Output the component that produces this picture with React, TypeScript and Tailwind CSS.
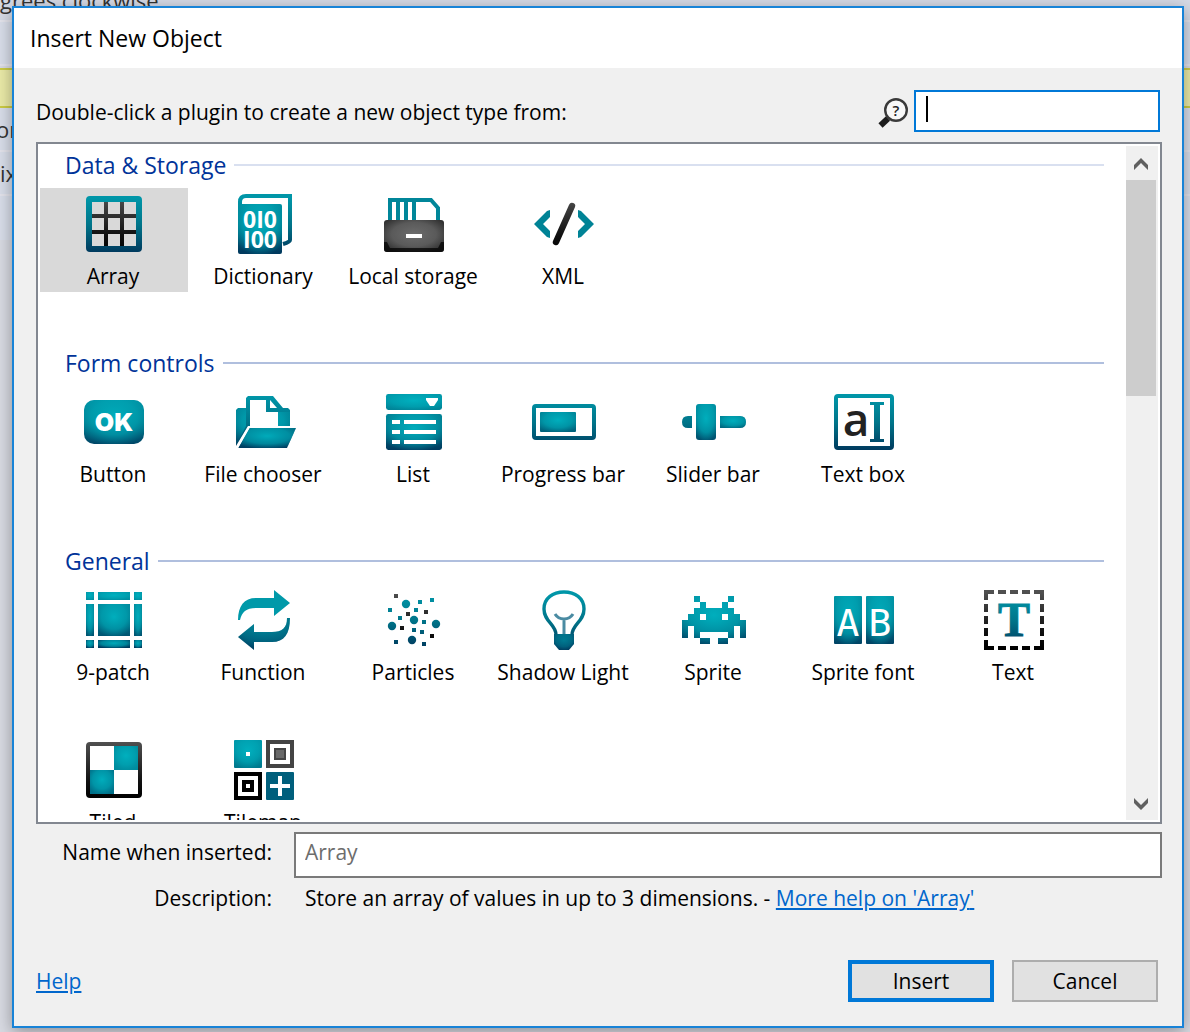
import type { ReactNode } from 'react'
import { useRef, useState } from 'react'
import clsx from 'clsx'

type Plugin = {
  id: string
  label: string
  description: string
  icon: ReactNode
}

type Group = { title: string; faint?: boolean; plugins: Plugin[] }

const TEAL = 'url(#teal)'
const GLOW = 'url(#glow)'
const DARK = 'url(#dark)'

function Icon({ children }: { children: ReactNode }) {
  return (
    <svg viewBox="0 0 32 32" className="size-16 shrink-0" aria-hidden>
      {children}
    </svg>
  )
}

// Gradients shared by all the plugin icons
function IconDefs() {
  return (
    <svg className="absolute size-0" aria-hidden>
      <defs>
        <linearGradient id="teal" gradientUnits="userSpaceOnUse" x1="0" y1="3" x2="0" y2="30">
          <stop offset="0" stopColor="#0096a8" />
          <stop offset="0.5" stopColor="#007489" />
          <stop offset="1" stopColor="#003a5e" />
        </linearGradient>
        <linearGradient id="dark" gradientUnits="userSpaceOnUse" x1="0" y1="2" x2="0" y2="30">
          <stop offset="0" stopColor="#505050" />
          <stop offset="0.7" stopColor="#101010" />
          <stop offset="1" stopColor="#000000" />
        </linearGradient>
        <radialGradient id="glow" cx="0.5" cy="0.4" r="0.65">
          <stop offset="0" stopColor="#00b4c2" stopOpacity="0.9" />
          <stop offset="0.6" stopColor="#00a8b7" stopOpacity="0.65" />
          <stop offset="1" stopColor="#00a0b0" stopOpacity="0" />
        </radialGradient>
        <radialGradient id="steel" cx="0.5" cy="0.45" r="0.62">
          <stop offset="0" stopColor="#6c6c6c" />
          <stop offset="0.6" stopColor="#5a5a5a" />
          <stop offset="1" stopColor="#303030" />
        </radialGradient>
      </defs>
    </svg>
  )
}

type BlockProps = { x: number; y: number; w: number; h: number; r?: number }

function Block({ x, y, w, h, r = 0.5 }: BlockProps) {
  return (
    <>
      <rect x={x} y={y} width={w} height={h} rx={r} fill={TEAL} />
      <rect x={x} y={y} width={w} height={h} rx={r} fill={GLOW} />
    </>
  )
}

const ArrayIcon = (
  <Icon>
    <path d="M5 12H27M5 20H27M12 5V27M20 5V27" stroke={DARK} strokeWidth="2" fill="none" />
    <rect x="3.5" y="3.5" width="25" height="25" rx="0.5" fill="none" stroke={TEAL} strokeWidth="3" />
  </Icon>
)

const DictionaryIcon = (
  <Icon>
    <path d="M4 10V5Q4 2 7 2H29V24Q29 25 25.5 26" fill="white" stroke={TEAL} strokeWidth="2" />
    <Block x={3} y={6} w={22} h={25} r={1} />
    <g className="font-['Open_Sans'] font-bold" fill="white" fontSize="11.5" textAnchor="middle">
      <text x="14" y="18">0I0</text>
      <text x="14" y="28">I00</text>
    </g>
  </Icon>
)

const LocalStorageIcon = (
  <Icon>
    <path d="M4 15V4H24.5L28 8V15M8 4V15M12 4V15M16 4V15" fill="none" stroke="#008699" strokeWidth="2" />
    <rect x="1" y="14" width="30" height="16" rx="1.5" fill="url(#steel)" />
    <path d="M1 25H2.5L4 28H28L29.5 25H31V28.5Q31 30 29.5 30H2.5Q1 30 1 28.5Z" fill="black" fillOpacity="0.7" />
    <rect x="12" y="21" width="8" height="2" fill="white" />
  </Icon>
)

const XmlIcon = (
  <Icon>
    <path d="M9 9V12.5L5.5 16L9 19.5V23L7.5 22.5L1 16L7.5 9.5ZM23 9V12.5L26.5 16L23 19.5V23L24.5 22.5L31 16L24.5 9.5Z" fill="#008396" />
    <path d="M12 25L20 7" stroke={DARK} strokeWidth="3.2" strokeLinecap="round" />
  </Icon>
)

const ButtonIcon = (
  <Icon>
    <Block x={1} y={5} w={30} h={22} r={5} />
    <text x="16" y="20.5" className="font-['Inter'] font-black" fill="white" fontSize="12.5" textAnchor="middle">OK</text>
  </Icon>
)

const FileChooserIcon = (
  <Icon>
    <path d="M2 28V10L3 9H7V4L8 3H20.5L25.5 9H28L29 10V18H8Z" fill={TEAL} />
    <path d="M2 28V10L3 9H7V18ZM23 11H29V18H23Z" fill={GLOW} />
    <path d="M9 5H17V11H23V18H9ZM19 5L22.5 9H19Z" fill="white" />
    <path d="M8.7 19H32L27.5 29H3Z" fill={TEAL} />
    <path d="M8.7 19H32L27.5 29H3Z" fill={GLOW} />
    <path d="M29 18.5H8.5L2.5 29" fill="none" stroke="white" strokeWidth="1" />
  </Icon>
)

const ListIcon = (
  <Icon>
    <Block x={2} y={2} w={28} h={8} r={1.2} />
    <path d="M22 4H28V5L26 8H24L22 5Z" fill="white" />
    <Block x={2} y={12} w={28} h={18} r={1.2} />
    <path d="M5 16H9M11 16H27M5 21H9M11 21H27M5 26H9M11 26H27" stroke="white" strokeWidth="2" />
  </Icon>
)

const ProgressBarIcon = (
  <Icon>
    <rect x="1" y="8" width="30" height="16" rx="1" fill="white" stroke={TEAL} strokeWidth="2" />
    <Block x={4} y={11} w={18} h={10} />
  </Icon>
)

const SliderBarIcon = (
  <Icon>
    <path d="M5 13V19H3Q0 19 0 16Q0 13 3 13ZM19 13H29Q32 13 32 16Q32 19 29 19H19Z" fill={TEAL} />
    <path d="M19 13H29Q32 13 32 16Q32 19 29 19H19Z" fill={GLOW} />
    <Block x={7} y={7} w={10} h={18} r={1.5} />
  </Icon>
)

const TextBoxIcon = (
  <Icon>
    <rect x="2" y="3" width="28" height="26" rx="1" fill="white" stroke={TEAL} strokeWidth="2" />
    <text x="12" y="23" className="font-['Open_Sans'] font-semibold" fill="#222" fontSize="23" textAnchor="middle">a</text>
    <rect x="19" y="6" width="7" height="1.5" fill={TEAL} />
    <rect x="19" y="24.5" width="7" height="1.5" fill={TEAL} />
    <rect x="21" y="7" width="3" height="18" fill={TEAL} />
  </Icon>
)

const NinePatchIcon = (
  <Icon>
    {[
      [2, 4],
      [8, 16],
      [26, 4]
    ].map(([y, h]) => (
      <g key={y}>
        <Block x={2} y={y} w={4} h={h} r={0} />
        <Block x={8} y={y} w={16} h={h} r={0} />
        <Block x={26} y={y} w={4} h={h} r={0} />
      </g>
    ))}
  </Icon>
)

const FunctionIcon = (
  <Icon>
    <path d="M21 1L29 7.5L21 14V10H12C7 10 5 12 4 16H3C3 9 6 5 12 5H21Z" fill="#0099a9" />
    <path d="M11 31L3 24.5L11 18V22H20C25 22 27.5 20 27.5 15H29C29 23 26 27 20 27H11Z" fill={TEAL} />
    <path d="M11 31L3 24.5L11 18V22H20C25 22 27.5 20 27.5 15H29C29 23 26 27 20 27H11Z" fill={GLOW} fillOpacity="0.4" />
  </Icon>
)

const dots = [[19, 7], [25, 6], [4, 11], [17, 11], [9, 15], [21, 17], [16, 21], [20, 22], [7, 27], [21, 28]]
const darkDots = [[7, 4], [13, 13], [22, 12], [10, 20], [25, 24]]
const bigDots = [[12, 8], [16, 16], [27, 18], [5, 19], [15, 26]]

const ParticlesIcon = (
  <Icon>
    {dots.map(([x, y]) => (
      <rect key={`${x}-${y}`} x={x - 1} y={y - 1} width="2" height="2" fill={TEAL} />
    ))}
    {darkDots.map(([x, y]) => (
      <rect key={`${x}-${y}`} x={x - 1} y={y - 1} width="2" height="2" fill={DARK} />
    ))}
    {bigDots.map(([x, y]) => (
      <circle key={`${x}-${y}`} cx={x} cy={y} r="2.1" fill={TEAL} />
    ))}
  </Icon>
)

const ShadowLightIcon = (
  <Icon>
    <path
      d="M12 23.5C12 18 6 17 6 10.5C6 5 10.5 2 16 2S26 5 26 10.5C26 17 20 18 20 23.5"
      fill="white"
      stroke={TEAL}
      strokeWidth="1.7"
    />
    <path d="M11.5 13Q13 15.5 16 15.5T20.5 13M16 15.5V23" fill="none" stroke="#4a8ba2" strokeWidth="1.5" />
    <path d="M11 23H21V28L18.5 31H13.5L11 28Z" fill={TEAL} />
    <path d="M11 23H21V28L18.5 31H13.5L11 28Z" fill={GLOW} fillOpacity="0.5" />
  </Icon>
)

const invader =
  'M6 4H9V7H12V10H20V7H23V4H26V7H23V10H26V13H29V16H32V25H29V19H26V25H23V28H18V25H23V22H9V25H14V28H9V25H6V19H3V25H0V16H3V13H6V10H9V7H6ZM9 13V16H12V13ZM20 13V16H23V13Z'

const SpriteIcon = (
  <Icon>
    <path d={invader} fill={TEAL} fillRule="evenodd" />
    <path d={invader} fill={GLOW} fillRule="evenodd" />
  </Icon>
)

const SpriteFontIcon = (
  <Icon>
    <Block x={1} y={4} w={14} h={24} />
    <Block x={17} y={4} w={14} h={24} />
    <g className="font-['DejaVu_Sans_Mono']" fill="white" fontSize="19" textAnchor="middle">
      <text x="8" y="24">A</text>
      <text x="24" y="24">B</text>
    </g>
  </Icon>
)

const TextIcon = (
  <Icon>
    <path
      d="M1 6V1H6V3H3V6ZM26 1H31V6H29V3H26ZM31 26V31H26V29H29V26ZM6 31H1V26H3V29H6ZM8 1H12V3H8ZM14 1H18V3H14ZM20 1H24V3H20ZM8 29H12V31H8ZM14 29H18V31H14ZM20 29H24V31H20ZM1 8H3V12H1ZM1 14H3V18H1ZM1 20H3V24H1ZM29 8H31V12H29ZM29 14H31V18H29ZM29 20H31V24H29Z"
      fill={DARK}
    />
    <text x="16" y="24" className="font-['Liberation_Serif'] font-bold" fill={TEAL} stroke={TEAL} strokeWidth="0.5" fontSize="24" textAnchor="middle">T</text>
  </Icon>
)

const TiledIcon = (
  <Icon>
    <rect x="3" y="3" width="26" height="26" rx="1" fill="white" stroke={DARK} strokeWidth="2" />
    <rect x="16" y="4" width="12" height="12" fill="#008c9e" />
    <rect x="16" y="4" width="12" height="12" fill={GLOW} />
    <rect x="4" y="16" width="12" height="12" fill="#006f88" />
    <rect x="4" y="16" width="12" height="12" fill={GLOW} />
  </Icon>
)

const TilemapIcon = (
  <Icon>
    <Block x={1} y={1} w={14} h={14} />
    <rect x="7" y="7" width="2" height="2" fill="white" />
    <rect x="18" y="2" width="12" height="12" fill="white" stroke="#444" strokeWidth="2" />
    <rect x="21.5" y="5.5" width="5" height="5" fill="#686868" stroke="#444" />
    <rect x="2" y="18" width="12" height="12" fill="white" stroke="black" strokeWidth="2" />
    <rect x="6" y="22" width="4" height="4" fill="white" stroke="black" strokeWidth="2" />
    <rect x="17" y="17" width="14" height="14" rx="0.5" fill="#005f7c" />
    <path d="M24 19V29M19 24H29" stroke="white" strokeWidth="2" />
  </Icon>
)

const groups: Group[] = [
  {
    title: 'Data & Storage',
    faint: true,
    plugins: [
      { id: 'array', label: 'Array', description: 'Store an array of values in up to 3 dimensions.', icon: ArrayIcon },
      { id: 'dictionary', label: 'Dictionary', description: 'Store values by key.', icon: DictionaryIcon },
      { id: 'local-storage', label: 'Local storage', description: 'Store values on disk.', icon: LocalStorageIcon },
      { id: 'xml', label: 'XML', description: 'Read XML documents.', icon: XmlIcon }
    ]
  },
  {
    title: 'Form controls',
    plugins: [
      { id: 'button', label: 'Button', description: 'A clickable button.', icon: ButtonIcon },
      { id: 'file-chooser', label: 'File chooser', description: 'Pick a file from disk.', icon: FileChooserIcon },
      { id: 'list', label: 'List', description: 'A list of items.', icon: ListIcon },
      { id: 'progress-bar', label: 'Progress bar', description: 'Show progress.', icon: ProgressBarIcon },
      { id: 'slider-bar', label: 'Slider bar', description: 'Pick a number.', icon: SliderBarIcon },
      { id: 'text-box', label: 'Text box', description: 'Enter text.', icon: TextBoxIcon }
    ]
  },
  {
    title: 'General',
    plugins: [
      { id: '9-patch', label: '9-patch', description: 'Stretch an image by parts.', icon: NinePatchIcon },
      { id: 'function', label: 'Function', description: 'Call events by name.', icon: FunctionIcon },
      { id: 'particles', label: 'Particles', description: 'Emit particles.', icon: ParticlesIcon },
      { id: 'shadow-light', label: 'Shadow Light', description: 'Cast shadows.', icon: ShadowLightIcon },
      { id: 'sprite', label: 'Sprite', description: 'An animated image.', icon: SpriteIcon },
      { id: 'sprite-font', label: 'Sprite font', description: 'Text from an image.', icon: SpriteFontIcon },
      { id: 'text', label: 'Text', description: 'Show text.', icon: TextIcon },
      { id: 'tiled', label: 'Tiled', description: 'A repeating image.', icon: TiledIcon },
      { id: 'tilemap', label: 'Tilemap', description: 'A map of tiles.', icon: TilemapIcon }
    ]
  }
]

const allPlugins = groups.flatMap((g) => g.plugins)

// Event sheet that shows around the dialog edges
function Backdrop() {
  return (
    <div className="absolute inset-0 flex flex-col overflow-hidden bg-[#d9dbe3] text-[22px] text-[#333]" aria-hidden>
      <div className="h-[22px] border-b-2 border-[#e4e4ec] bg-[#d6dae6]">
        <p className="-mt-3 whitespace-nowrap leading-6">grees clockwise</p>
      </div>
      <div className="h-11 border-b-2 border-[#e4e4ec] bg-[#d9deea]" />
      <div className="mt-0.5 h-10 border-y-2 border-[#cccc44] bg-[#ebeba8]" />
      <div className="flex h-11 items-center border-b-2 border-[#e4e4ec] bg-[#d9deea]">
        <span className="-ml-1">or</span>
      </div>
      <div className="flex h-11 items-center border-b-2 border-[#e4e4ec] bg-[#d9deea]">ix</div>
      <div className="h-11 bg-[#d9deea]" />
    </div>
  )
}

function SearchIcon() {
  return (
    <svg viewBox="0 0 30 30" className="mt-1 size-[30px]" aria-hidden>
      <path d="M2.5 27.5L10 20.5" stroke="#1c1c1c" strokeWidth="6" />
      <circle cx="18" cy="12" r="10.8" fill="#f8f8f8" stroke="#3a3a3a" strokeWidth="2.4" />
      <text x="18" y="18" className="font-['Open_Sans'] font-semibold" fill="#222" fontSize="15" textAnchor="middle">?</text>
    </svg>
  )
}

function Chevron({ down }: { down?: boolean }) {
  return (
    <svg viewBox="0 0 14 12" className={clsx('h-3 w-3.5', down && 'rotate-180')} aria-hidden>
      <path d="M0 7L7 0L14 7V12L7 5L0 12Z" fill="#606060" />
    </svg>
  )
}

export default function App() {
  const [selectedId, setSelectedId] = useState('array')
  const [query, setQuery] = useState('')
  const listRef = useRef<HTMLDivElement>(null)

  const selected = allPlugins.find((p) => p.id === selectedId) ?? allPlugins[0]
  const scroll = (top: number) => listRef.current?.scrollBy({ top })

  return (
    <div className="relative h-screen min-h-[640px] overflow-hidden pb-1 pl-3 pr-1.5 pt-1.5 font-['Open_Sans',sans-serif] text-[21px] leading-7 text-black">
      <Backdrop />
      <IconDefs />

      <div
        role="dialog"
        aria-labelledby="dialog-title"
        className="relative flex h-full flex-col border-2 border-[#1883d7] bg-[#f0f0f0] shadow-[0_4px_16px_rgba(0,0,0,0.35)]"
      >
        <h1 id="dialog-title" className="flex h-[60px] shrink-0 items-center bg-white px-4 text-[23px]">
          Insert New Object
        </h1>

        <div className="flex min-h-0 flex-1 flex-col pb-6 pl-[22px] pr-5 pt-[22px]">
          <div className="flex items-center justify-between pr-0.5">
            <label htmlFor="search" className="pt-0.5">
              Double-click a plugin to create a new object type from:
            </label>
            <div className="flex items-center gap-1.5">
              <SearchIcon />
              <div className="relative">
                <input
                  id="search"
                  type="text"
                  value={query}
                  onChange={(e) => setQuery(e.target.value)}
                  className="block h-[42px] w-[246px] border-2 border-[#0078d7] bg-white px-2.5 outline-none"
                />
                {query === '' ? <span className="absolute left-3 top-1.5 h-[26px] w-0.5 bg-black" /> : null}
              </div>
            </div>
          </div>

          <div className="mt-2.5 flex min-h-0 flex-1 border-2 border-[#828790] bg-white p-0.5">
            <div ref={listRef} className="flex flex-1 flex-col gap-1.5 overflow-y-auto [scrollbar-width:none]">
              {groups.map((group) => (
                <section key={group.title} className="pb-[46px]">
                  <h2 className="mb-1 flex h-[38px] items-center gap-2 pl-[25px] pr-[22px] text-[23px] text-[#003399]">
                    {group.title}
                    <span className={clsx('h-0.5 flex-1', group.faint ? 'bg-[#d9e0f0]' : 'bg-[#b0bfde]')} />
                  </h2>
                  <div className="grid grid-cols-[repeat(auto-fill,148px)] gap-x-0.5 gap-y-[46px]">
                    {group.plugins.map((p) => (
                      <button
                        key={p.id}
                        type="button"
                        onClick={() => setSelectedId(p.id)}
                        className={clsx(
                          'flex h-[104px] flex-col items-center pt-1',
                          p.id === selectedId && 'bg-[#d9d9d9]'
                        )}
                      >
                        {p.icon}
                        <span className="mt-1.5 pr-0.5">{p.label}</span>
                      </button>
                    ))}
                  </div>
                </section>
              ))}
            </div>

            <div className="flex w-8 flex-col bg-[#f0f0f0]">
              <button type="button" aria-label="Scroll up" onClick={() => scroll(-150)} className="flex h-[34px] w-[30px] items-center justify-center pt-0.5">
                <Chevron />
              </button>
              <div className="flex-1">
                <div className="h-5/14 w-[30px] bg-[#cdcdcd]" />
              </div>
              <button type="button" aria-label="Scroll down" onClick={() => scroll(150)} className="flex h-[34px] w-[30px] items-center justify-center pt-0.5">
                <Chevron down />
              </button>
            </div>
          </div>

          <div className="mt-2 grid grid-cols-[236px_1fr] gap-x-[22px]">
            <label htmlFor="object-name" className="pt-1.5 text-right">
              Name when inserted:
            </label>
            <input
              id="object-name"
              type="text"
              placeholder={selected.label}
              className="h-[46px] min-w-0 border-2 border-[#7a7a7a] bg-white px-[9px] pb-1.5 outline-none placeholder:text-[#6d6d6d]"
            />
            <span className="pt-1.5 text-right">Description:</span>
            <p className="pl-[11px] pt-1.5">
              {selected.description} -{' '}
              <a href="#more-help" className="text-[#0066cc] underline">
                More help on '{selected.label}'
              </a>
            </p>
          </div>

          <div className="mt-12 flex items-center justify-between pr-1">
            <a href="#help" className="text-[#0066cc] underline">
              Help
            </a>
            <div className="flex gap-[18px]">
              <button type="button" className="h-[42px] w-[146px] border-4 border-[#0078d7] bg-[#e1e1e1]">
                Insert
              </button>
              <button type="button" className="h-[42px] w-[146px] border-2 border-[#adadad] bg-[#e1e1e1]">
                Cancel
              </button>
            </div>
          </div>
        </div>
      </div>
    </div>
  )
}
